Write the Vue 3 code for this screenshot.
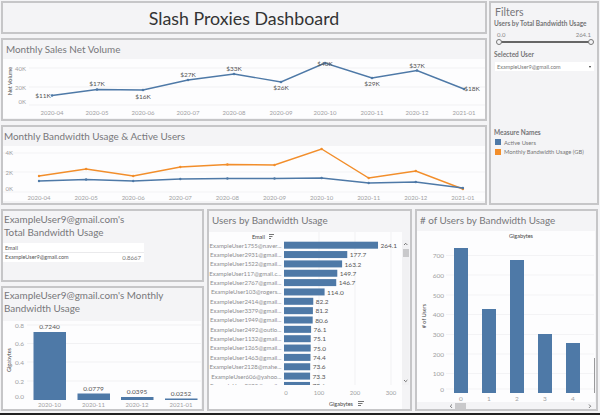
<template>
  <div class="dash">
    <div class="top-row">
      <div class="main-col">
        <div class="title-box"><h1>Slash Proxies Dashboard</h1></div>

        <div class="panel sales">
          <h2 class="head">Monthly Sales Net Volume</h2>
          <svg width="482" height="59" viewBox="3 61 482 59">
            <rect x="3" y="61" width="482" height="59" fill="#fdfdfe" />
            <line v-for="y in [70, 89, 107]" :key="y" x1="29" x2="485" :y1="y" :y2="y" stroke="#f1f1f3" />
            <text class="rot" transform="translate(12 83) rotate(-90)" text-anchor="middle">Net Volume</text>
            <text v-for="t in salesTicks" :key="t.label" class="tick" x="26" :y="t.y" text-anchor="end">{{ t.label }}</text>
            <polyline :points="line(sales)" fill="none" stroke="#4e79a7" stroke-width="1.4" />
            <circle v-for="p in sales" :key="p.m" :cx="p.x" :cy="p.y" r="1.3" fill="#4e79a7" />
            <text v-for="p in sales" :key="'l' + p.m" class="val" :x="p.lx" :y="p.ly" text-anchor="middle">{{ p.label }}</text>
            <text v-for="p in sales" :key="'m' + p.m" class="tick" :x="p.x" y="116.5" text-anchor="middle">{{ p.m }}</text>
          </svg>
        </div>

        <div class="panel usage">
          <h2 class="head flush">Monthly Bandwidth Usage &amp; Active Users</h2>
          <svg width="482" height="55" viewBox="3 148 482 55">
            <rect x="3" y="148" width="482" height="55" fill="#fdfdfe" />
            <line v-for="y in [155, 174, 194]" :key="y" x1="3" x2="485" :y1="y" :y2="y" stroke="#f3f3f5" />
            <text v-for="t in usageTicks" :key="t.label" class="tick" x="13" :y="t.y" text-anchor="end">{{ t.label }}</text>
            <polyline :points="line(bandwidth)" fill="none" stroke="#f28e2b" stroke-width="1.4" />
            <polyline :points="line(active)" fill="none" stroke="#4e79a7" stroke-width="1.4" />
            <circle v-for="p in bandwidth" :key="'o' + p.x" :cx="p.x" :cy="p.y" r="1.2" fill="#f28e2b" />
            <circle v-for="p in active" :key="'b' + p.x" :cx="p.x" :cy="p.y" r="1.2" fill="#4e79a7" />
            <text v-for="p in active" :key="p.m" class="tick" :x="p.x" y="201.5" text-anchor="middle">{{ p.m }}</text>
          </svg>
        </div>
      </div>

      <aside class="filters">
        <h2 class="filters-title">Filters</h2>
        <div class="filter-label first">Users by Total Bandwidth Usage</div>
        <div class="range-values"><span>0.0</span><span>264.1</span></div>
        <div class="slider"><i class="knob"></i><i class="knob"></i></div>
        <div class="filter-label selected">Selected User</div>
        <div class="select">
          <span>ExampleUser9@gmail.com</span>
          <i class="caret"></i>
        </div>
        <div class="filter-label legend-title">Measure Names</div>
        <div v-for="item in legend" :key="item.name" class="legend-row">
          <i class="swatch" :style="{ background: item.color }"></i>{{ item.name }}
        </div>
      </aside>
    </div>

    <div class="bottom-row">
      <div class="left-col">
        <div class="panel total">
          <h2 class="head flush two-line">ExampleUser9@gmail.com's<br />Total Bandwidth Usage</h2>
          <div class="mini-table">
            <div class="mini-head">Email</div>
            <div class="mini-row"><span>ExampleUser9@gmail.com</span><span class="mini-val">0.8667</span></div>
          </div>
        </div>

        <div class="panel monthly">
          <h2 class="head flush two-line tall">ExampleUser9@gmail.com's Monthly<br />Bandwidth Usage</h2>
          <svg width="198" height="88" viewBox="3 321 198 88">
            <rect x="3" y="321" width="198" height="88" fill="#fdfdfe" />
            <line v-for="y in [325, 343.5, 362, 381]" :key="y" x1="27" x2="201" :y1="y" :y2="y" stroke="#f1f1f3" />
            <text class="rot" transform="translate(11 360) rotate(-90)" text-anchor="middle">Gigabytes</text>
            <text v-for="t in monthlyTicks" :key="t.label" class="tick big" x="24" :y="t.y" text-anchor="end">{{ t.label }}</text>
            <g v-for="b in monthly" :key="b.m">
              <rect :x="b.x" :y="b.top" width="32.5" :height="400 - b.top" fill="#4e79a7" />
              <text class="val" :x="b.x + 16" :y="b.top - 3" text-anchor="middle">{{ b.label }}</text>
              <text class="tick" :x="b.x + 16" y="407" text-anchor="middle">{{ b.m }}</text>
            </g>
          </svg>
        </div>
      </div>

      <div class="panel users">
        <h2 class="head">Users by Bandwidth Usage</h2>
        <svg width="200" height="179" viewBox="210 229 200 179">
          <rect x="210" y="231" width="193" height="177" fill="#fdfdfe" />
          <text class="rot" x="253" y="238">Email</text>
          <path d="M270 233.5H275M270 235.5H273.5M270 237.5H272" stroke="#666" stroke-width=".9" fill="none" />
          <line v-for="x in [320, 356, 392]" :key="x" :x1="x" :x2="x" y1="231" y2="384" stroke="#f1f1f3" />
          <clipPath id="rows"><rect x="210" y="239" width="193" height="145" /></clipPath>
          <g clip-path="url(#rows)">
            <g v-for="(u, i) in topUsers" :key="u.name">
              <text class="name" x="282.5" :y="246.6 + i * 9.35" text-anchor="end">{{ u.name }}</text>
              <rect x="285" :y="240.7 + i * 9.35" :width="u.gb * 0.356" height="7" fill="#4e79a7" />
              <text class="val" :x="287.5 + u.gb * 0.356" :y="246.8 + i * 9.35">{{ u.text }}</text>
            </g>
          </g>
          <text v-for="t in gbTicks" :key="t.label" class="tick" :x="t.x" y="394" text-anchor="middle">{{ t.label }}</text>
          <text class="rot" x="330" y="405">Gigabytes</text>
          <path d="M359 400.5H365M359 402.5H363.5M359 404.5H362" stroke="#666" stroke-width=".9" fill="none" />
          <rect x="403" y="239" width="7" height="145" fill="#f1f1f3" />
          <rect x="404" y="248" width="6" height="8" fill="#c9c9cb" />
          <path d="M405 244l1.7-1.7 1.7 1.7M405 379l1.7 1.7 1.7-1.7" stroke="#555" stroke-width=".8" fill="none" />
        </svg>
      </div>

      <div class="panel histogram">
        <h2 class="head"># of Users by Bandwidth Usage</h2>
        <svg width="178" height="179" viewBox="418 229 178 179">
          <rect x="418" y="230" width="178" height="171" fill="#fdfdfe" />
          <text class="rot" x="522" y="237" text-anchor="middle">Gigabytes</text>
          <text class="rot" transform="translate(427 315) rotate(-90)" text-anchor="middle"># of Users</text>
          <line v-for="t in histTicks" :key="t.label" x1="447" x2="595" :y1="t.y - 2.5" :y2="t.y - 2.5" stroke="#f3f3f5" />
          <text v-for="t in histTicks" :key="'t' + t.label" class="tick big" x="445" :y="t.y" text-anchor="end">{{ t.label }}</text>
          <g v-for="(b, i) in hist" :key="i">
            <rect :x="455 + i * 28" :y="b" width="14" :height="392 - b" fill="#4e79a7" />
            <text class="tick big" :x="462 + i * 28" y="400" text-anchor="middle">{{ i }}</text>
          </g>
          <rect x="595" y="357" width="1" height="35" fill="#9a9a9c" />
          <rect x="456" y="402" width="11" height="6" fill="#c9c9cb" />
          <path d="M453 403.5l-1.7 1.7 1.7 1.7M590 403.5l1.7 1.7-1.7 1.7" stroke="#555" stroke-width=".8" fill="none" />
        </svg>
      </div>
    </div>
    <div class="footer-line"></div>
  </div>
</template>

<script setup>
const months = ['2020-04', '2020-05', '2020-06', '2020-07', '2020-08', '2020-09', '2020-10', '2020-11', '2020-12', '2021-01']

const sales = [
  { m: months[0], x: 52, y: 97.5, label: '$11K', lx: 43, ly: 99.5 },
  { m: months[1], x: 97, y: 91.5, label: '$17K', lx: 97, ly: 88 },
  { m: months[2], x: 143, y: 92, label: '$16K', lx: 143, ly: 101 },
  { m: months[3], x: 188, y: 82, label: '$27K', lx: 188, ly: 78.5 },
  { m: months[4], x: 234, y: 76, label: '$33K', lx: 234, ly: 72.5 },
  { m: months[5], x: 281, y: 84, label: '$26K', lx: 281, ly: 92 },
  { m: months[6], x: 325, y: 65, label: '$40K', lx: 325, ly: 68 },
  { m: months[7], x: 372, y: 80, label: '$29K', lx: 372, ly: 88 },
  { m: months[8], x: 417, y: 72.5, label: '$37K', lx: 417, ly: 69.5 },
  { m: months[9], x: 464, y: 91, label: '$18K', lx: 472, ly: 93 },
]

const salesTicks = [
  { label: '40K', y: 72.5 },
  { label: '20K', y: 91.5 },
  { label: '0K', y: 106 },
]

const usageTicks = [
  { label: '4K', y: 157 },
  { label: '2K', y: 176.5 },
  { label: '0K', y: 192.5 },
]

const bandwidth = [178, 171, 178, 169, 166.5, 167, 151, 180, 173, 191].map((y, i) => ({ x: 39 + i * 47.1, y }))
const active = [183, 181.5, 183, 181, 180.5, 180.5, 180, 185, 184, 190].map((y, i) => ({ x: 39 + i * 47.1, y, m: months[i] }))

const line = (pts) => pts.map((p) => `${p.x},${p.y}`).join(' ')

const legend = [
  { name: 'Active Users', color: '#4e79a7' },
  { name: 'Monthly Bandwidth Usage (GB)', color: '#f28e2b' },
]

const monthlyTicks = [
  { label: '0.8', y: 327.5 },
  { label: '0.6', y: 346 },
  { label: '0.4', y: 365 },
  { label: '0.2', y: 384 },
  { label: '0.0', y: 399 },
]

const monthly = [
  { m: '2020-10', x: 33.5, top: 332, label: '0.7240' },
  { m: '2020-11', x: 77.5, top: 393.5, label: '0.0779' },
  { m: '2020-12', x: 121, top: 397, label: '0.0395' },
  { m: '2021-01', x: 165, top: 398.5, label: '0.0252' },
]

const topUsers = [
  { name: 'ExampleUser1755@naver...', gb: 264.1, text: '264.1' },
  { name: 'ExampleUser2931@gmail...', gb: 177.7, text: '177.7' },
  { name: 'ExampleUser1522@gmail...', gb: 163.2, text: '163.2' },
  { name: 'ExampleUser117@gmail.c...', gb: 149.7, text: '149.7' },
  { name: 'ExampleUser2767@gmail...', gb: 146.7, text: '146.7' },
  { name: 'ExampleUser103@rogers...', gb: 114.0, text: '114.0' },
  { name: 'ExampleUser2414@gmail...', gb: 82.2, text: '82.2' },
  { name: 'ExampleUser3379@gmail...', gb: 81.2, text: '81.2' },
  { name: 'ExampleUser1949@gmail...', gb: 80.6, text: '80.6' },
  { name: 'ExampleUser2492@outlo...', gb: 76.1, text: '76.1' },
  { name: 'ExampleUser1132@gmail...', gb: 75.1, text: '75.1' },
  { name: 'ExampleUser1265@gmail...', gb: 75.0, text: '75.0' },
  { name: 'ExampleUser1463@gmail...', gb: 74.4, text: '74.4' },
  { name: 'ExampleUser2128@mahe...', gb: 73.6, text: '73.6' },
  { name: 'ExampleUser606@yahoo...', gb: 73.3, text: '73.3' },
  { name: 'ExampleUser3095@gmail...', gb: 73.1, text: '73.6' },
]

const gbTicks = [
  { label: '0', x: 287 },
  { label: '100', x: 320 },
  { label: '200', x: 356 },
  { label: '300', x: 392 },
]

const histTicks = [
  { label: '700', y: 257 },
  { label: '600', y: 276.5 },
  { label: '500', y: 296.5 },
  { label: '400', y: 316 },
  { label: '300', y: 336 },
  { label: '200', y: 355.5 },
  { label: '100', y: 375 },
  { label: '0', y: 390.5 },
]

const hist = [247, 308, 259, 333, 342]
</script>

<style>
html,
body {
  margin: 0;
  background: #f4f4f6;
}
</style>

<style scoped>
.dash {
  width: 600px;
  height: 415px;
  box-sizing: border-box;
  padding: 1px 1px 0;
  display: flex;
  flex-direction: column;
  overflow: hidden;
  background: #f4f4f6;
  font-family: Lato, sans-serif;
  color: #6b6b6d;
}
.top-row {
  display: flex;
  gap: 2px;
  height: 204px;
}
.main-col {
  width: 486px;
  display: flex;
  flex-direction: column;
  gap: 4px;
}
.title-box {
  height: 33px;
  box-sizing: border-box;
  border: 2px solid #c6c6c8;
  display: flex;
  align-items: center;
  justify-content: center;
}
h1 {
  margin: 0;
  font-size: 17.8px;
  font-weight: 400;
  color: #333;
}
.panel {
  box-sizing: border-box;
  border: 2px solid #c6c6c8;
  background: #f4f4f6;
  overflow: hidden;
}
.panel svg {
  display: block;
}
.head {
  margin: 0;
  height: 19px;
  padding: 0 3px;
  font-size: 9.9px;
  font-weight: 400;
  line-height: 18px;
  color: #77777a;
  white-space: nowrap;
}
.head.flush {
  padding: 0 1px;
}
.sales {
  height: 83px;
}
.usage {
  height: 80px;
}
.filters {
  flex: 1;
  box-sizing: border-box;
  border: 2px solid #c6c6c8;
  padding: 2px 3px;
  font-size: 6.5px;
}
.filters-title {
  margin: 0 0 0 1px;
  font-size: 10.5px;
  font-weight: 400;
  line-height: 14px;
  color: #77777a;
}
.filter-label {
  font-size: 6.5px;
  font-weight: 700;
  line-height: 9px;
  color: #747476;
  white-space: nowrap;
}
.range-values {
  display: flex;
  justify-content: space-between;
  margin: 2px 3px 0 3px;
  line-height: 9px;
  font-size: 6px;
  color: #888;
}
.slider {
  position: relative;
  height: 2px;
  margin: 2px 2px 0 4px;
  background: #666;
}
.knob {
  position: absolute;
  top: -2px;
  width: 4px;
  height: 4px;
  border: 1px solid #777;
  border-radius: 50%;
  background: #f4f4f6;
  left: -2px;
}
.knob + .knob {
  left: auto;
  right: -2px;
}
.selected {
  margin-top: 7px;
}
.select {
  display: flex;
  justify-content: space-between;
  align-items: center;
  margin: 3px 0 0 1px;
  height: 9px;
  padding: 0 3px 0 2px;
  background: #fff;
  font-size: 5.5px;
  color: #777;
}
.caret {
  width: 0;
  height: 0;
  border-left: 1.5px solid transparent;
  border-right: 1.5px solid transparent;
  border-top: 2px solid #333;
}
.legend-title {
  margin-top: 58px;
  line-height: 8px;
}
.legend-row {
  display: flex;
  align-items: center;
  gap: 3px;
  margin: 1.5px 0 0 1px;
  height: 7px;
  padding-bottom: 1px;
  font-size: 5.8px;
  color: #777;
  white-space: nowrap;
}
.swatch {
  width: 6px;
  height: 6px;
  flex: none;
}
.bottom-row {
  display: flex;
  gap: 3px;
  margin-top: 4px;
  height: 202px;
}
.left-col {
  width: 203px;
  display: flex;
  flex-direction: column;
  gap: 4px;
}
.total {
  height: 73px;
}
.two-line {
  height: auto;
  padding-top: 2px;
  line-height: 13px;
}
.head.flush.two-line {
  padding-top: 2px;
}
.mini-table {
  width: 141px;
  margin-top: 4px;
  background: #fff;
  font-size: 5.5px;
  color: #555;
}
.mini-head {
  height: 10px;
  line-height: 10px;
  padding-left: 2px;
  border-bottom: 1px solid #eaeaec;
  box-sizing: border-box;
}
.mini-row {
  display: flex;
  justify-content: space-between;
  height: 9px;
  line-height: 9px;
  padding: 0 3px 0 2px;
}
.mini-val {
  font-size: 6px;
  color: #777;
}
.monthly {
  height: 125px;
}
.tall {
  height: 33px;
  box-sizing: border-box;
}
.head.flush.tall {
  padding-top: 1px;
}
.users {
  width: 205px;
  height: 202px;
}
.histogram {
  width: 183px;
  height: 202px;
}
svg text {
  font-family: Lato, sans-serif;
}
.tick {
  font-size: 6px;
  fill: #a0a0a2;
}
.tick.big {
  font-size: 6.5px;
}
.val {
  font-size: 6.5px;
  fill: #555;
}
.rot {
  font-size: 5.5px;
  fill: #444;
}
.name {
  font-size: 6px;
  fill: #8d8d90;
}
.footer-line {
  margin-top: auto;
  flex: none;
  height: 2px;
  margin-left: -1px;
  margin-right: -1px;
  background: #222;
}
</style>
